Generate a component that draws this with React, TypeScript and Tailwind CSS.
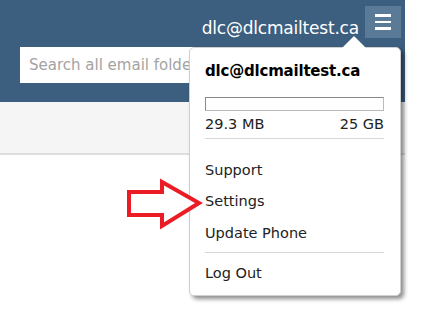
export default function App() {
  return (
    <div className="relative w-[429px] h-[335px] overflow-hidden bg-white font-['DejaVu_Sans',sans-serif]">
      <div className="w-[405px]">
        {/* Header */}
        <div className="h-[102px] bg-[#3c5e7f] flex flex-col">
          <div className="flex items-start justify-end pt-[6px] pr-[4px] gap-[6px]">
            <span className="mt-[14px] text-white text-[17px] leading-none tracking-[-0.2px]">dlc@dlcmailtest.ca</span>
            <button className="w-[36px] h-[32px] bg-[#5b7a98] flex flex-col items-center justify-center gap-[4px]">
              <span className="block w-[16px] h-[2.5px] bg-white" />
              <span className="block w-[16px] h-[2.5px] bg-white" />
              <span className="block w-[16px] h-[2.5px] bg-white" />
            </button>
          </div>
          <div className="pl-[20px] mt-[9px]">
            <input
              readOnly
              placeholder="Search all email folders"
              className="w-[290px] h-[36px] bg-white px-[9px] text-[15px] placeholder:text-[#a3a3a3] outline-none"
            />
          </div>
        </div>
        <div className="h-[53px] bg-[#f5f5f5] border-b-2 border-[#dedede]" />
      </div>

      {/* Dropdown */}
      <div className="absolute left-[189px] top-[47px] w-[212px] h-[249px] bg-white rounded-[5px] border border-[#cfcfcf] shadow-[3px_3px_4px_rgba(0,0,0,0.45)] pl-[15px] pr-[16px] text-[#222] leading-none">
        <div className="absolute -top-[12px] left-[152px] w-0 h-0 border-l-[12px] border-r-[12px] border-b-[12px] border-l-transparent border-r-transparent border-b-white" />
        <div className="pt-[16px] font-bold text-[15px] text-black tracking-[-0.2px]">dlc@dlcmailtest.ca</div>
        <div className="mt-[18px] h-[14px] border border-[#bbb] border-t-[#888] border-l-[#888] bg-white" />
        <div className="flex justify-between mt-[6px] text-[14.5px]">
          <span>29.3 MB</span>
          <span>25 GB</span>
        </div>
        <div className="mt-[6px] border-t border-[#d6d6d6]" />
        <div className="flex flex-col pt-[24px] text-[14.5px] gap-[17px]">
          <span>Support</span>
          <span>Settings</span>
          <span>Update Phone</span>
        </div>
        <div className="mt-[12px] border-t border-[#d6d6d6]" />
        <div className="pt-[13px] text-[14.5px]">Log Out</div>
      </div>

      {/* Red arrow */}
      <svg className="absolute left-[120px] top-[170px]" width="90" height="66" viewBox="0 0 90 66">
        <path d="M9 22 H42 V12 L79 33 L42 56 V45 H9 Z" fill="white" stroke="#ec1c24" strokeWidth="4" strokeLinejoin="miter" />
      </svg>
    </div>
  );
}
